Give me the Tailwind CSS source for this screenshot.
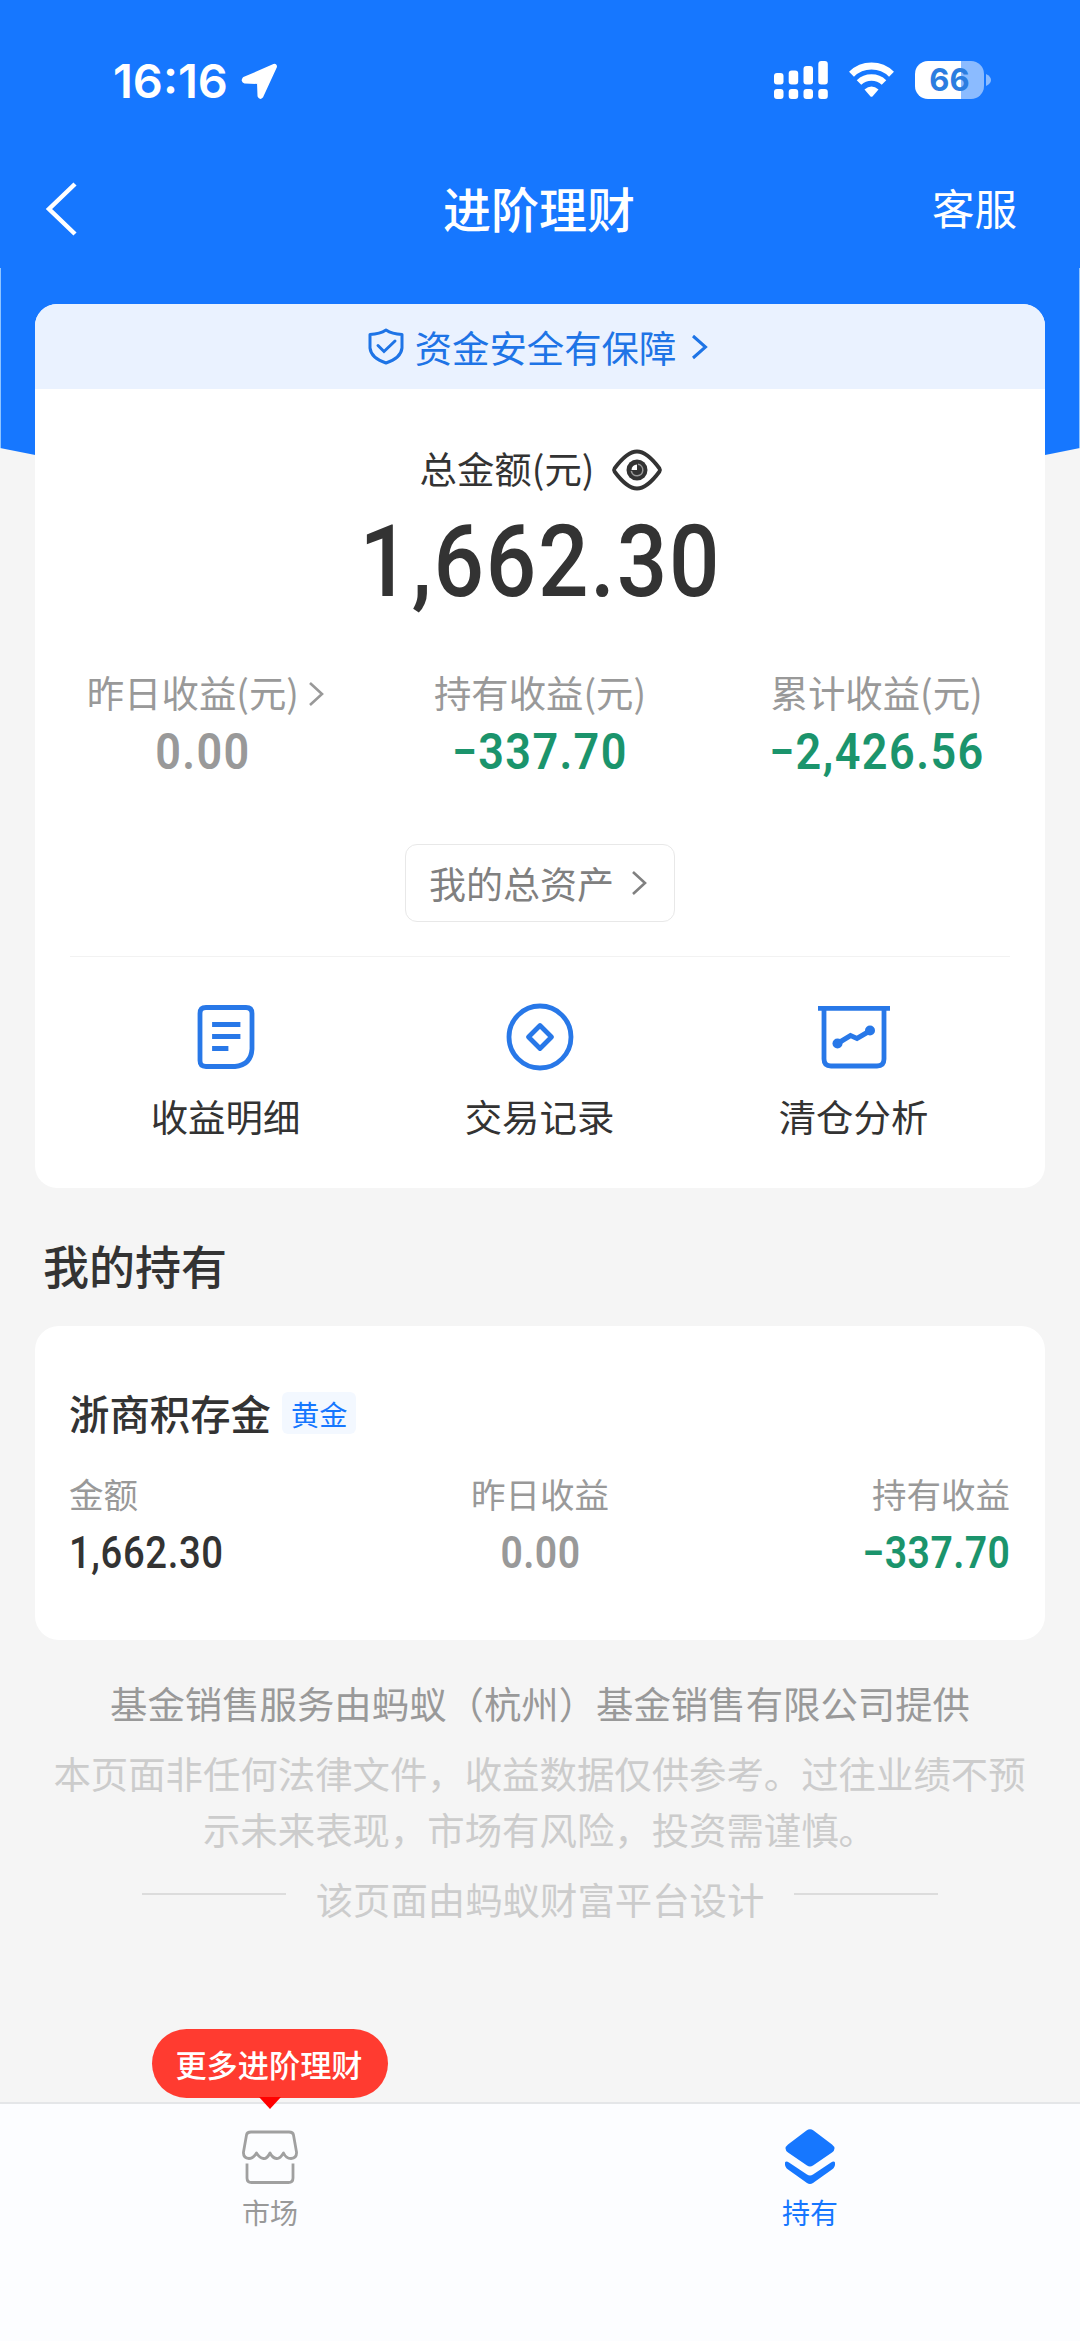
<!DOCTYPE html>
<html lang="zh-CN">
<head>
<meta charset="utf-8">
<title>进阶理财</title>
<script src="https://cdn.jsdelivr.net/npm/@tailwindcss/browser@4"></script>
</head>
<body class="bg-[#f5f5f5]">
<div class="relative isolate flex h-[2341px] w-[1080px] flex-col overflow-hidden bg-[#f5f5f5] font-['Noto_Sans_CJK_SC',sans-serif] text-[37.4px] text-[#333]">

  <!-- blue backdrop with a curved lower edge -->
  <svg class="absolute top-0 left-0 -z-10" width="1080" height="480" viewBox="0 0 1080 480"><path d="M0 0H1080V448Q540 560 0 448Z" fill="#1677ff"/><path d="M.5 268V448M1079.5 268V448" stroke="#8fc4ff"/></svg>

  <!-- status bar -->
  <div class="flex h-[160px] items-center justify-between pr-[89px] pl-[113px] text-white">
    <div class="flex items-center gap-[12px]">
      <span class="mt-[2px] font-[Inter,sans-serif] text-[47px] leading-[60px] font-semibold">16:16</span>
      <svg class="mt-[1px]" width="38" height="38" viewBox="0 0 38 38"><path d="M34 3.500 4 16.500Q2 19 5 20L18.500 20.500 19 34Q20 36.500 21.700 34.500L35.500 4.500Q35.500 3 34 3.500Z" fill="#fff" stroke="#fff" stroke-width="3" stroke-linejoin="round"/></svg>
    </div>
    <div class="flex items-center">
      <svg width="54" height="38" viewBox="0 0 54 38" fill="#fff"><rect y="12" width="9.500" height="11.500" rx="3"/><rect x="14.700" y="9.500" width="9.500" height="14" rx="3"/><rect x="29.500" y="5" width="9.500" height="18.500" rx="3"/><rect x="44.300" y="0" width="9.500" height="23.500" rx="3"/><rect y="28" width="9.500" height="10" rx="3"/><rect x="14.700" y="28" width="9.500" height="10" rx="3"/><rect x="29.500" y="28" width="9.500" height="10" rx="3"/><rect x="44.300" y="28" width="9.500" height="10" rx="3"/></svg>
      <svg class="ml-[20px]" width="47" height="36" viewBox="0 0 47 36"><path d="M3.500 12.300A28.500 28.500 0 0 1 43.500 12.300" fill="none" stroke="#fff" stroke-width="7"/><path d="M11 20.500A18 18 0 0 1 36 20.500" fill="none" stroke="#fff" stroke-width="6.500"/><path d="M16.500 27.500Q23.500 21.500 30.500 27.500L24.700 34.200Q23.500 35.300 22.300 34.200Z" fill="#fff"/></svg>
      <div class="ml-[20px] flex h-[38px] w-[69px] items-center justify-center rounded-[13px] bg-[linear-gradient(to_right,#fff_46px,#8bbbff_46px)] font-[Inter,sans-serif] text-[31px] leading-[38px] font-bold text-[#2b7de0]">66</div>
      <svg class="ml-[2px]" width="5" height="12" viewBox="0 0 5 12"><path d="M0 0Q5 2.500 5 6T0 12Z" fill="#8bbbff"/></svg>
    </div>
  </div>

  <!-- navigation -->
  <div class="grid h-[90px] grid-cols-3 items-center text-white">
    <svg class="mt-[5px] ml-[44px]" width="36" height="56" viewBox="0 0 36 56"><path d="M31 3 5 28 31 53" fill="none" stroke="#fff" stroke-width="4.500"/></svg>
    <h1 class="pt-[2px] pr-[2px] text-center text-[48px] leading-[90px] font-medium">进阶理财</h1>
    <div class="pt-[2px] pr-[63px] text-right text-[42.500px] leading-[90px]">客服</div>
  </div>

  <!-- summary card -->
  <section class="mx-[35px] mt-[54px] flex h-[884px] flex-col overflow-hidden rounded-[22px] bg-white">
    <div class="flex h-[85px] items-center justify-center bg-[#eaf2ff] pr-[3px] text-[#1e74e6]">
      <svg width="36" height="37" viewBox="0 0 36 37" fill="none" stroke="currentColor" stroke-width="3"><path d="M18 2Q24 6 34 6.500V20Q33 30 18 35Q3 30 2 20V6.500Q12 6 18 2Z" stroke-linejoin="round"/><path d="M10 17.500 16 23.500 27 13" stroke-linecap="round"/></svg>
      <span class="ml-[11px] pt-[2px] leading-[83px]">资金安全有保障</span>
      <svg class="ml-[15px]" width="18" height="26" viewBox="0 0 18 26" fill="none" stroke="currentColor" stroke-width="3"><path d="M2 2 14.500 13 2 24"/></svg>
    </div>

    <div class="mt-[49px] flex h-[60px] items-center justify-center gap-[17px]">
      <span class="pl-[3px] leading-[60px]">总金额(元)</span>
      <svg class="mt-[3px]" width="52" height="42" viewBox="0 0 52 42"><path d="M3.500 19.500Q16 2.500 26 2.500T48.500 19.500Q49.500 21 48.500 22.500Q36 39.500 26 39.500T3.500 22.500Q2.500 21 3.500 19.500Z" fill="none" stroke="#333" stroke-width="3.800"/><circle cx="26" cy="21" r="10.500" fill="#333"/><path d="M26 15.500V21H20.500A5.500 5.500 0 0 1 26 15.500Z" fill="#fff"/><path d="M27 15.300A5.800 5.800 0 1 1 20.300 22" fill="none" stroke="#999" stroke-width="1.500"/></svg>
    </div>
    <div class="mt-[14px] flex h-[100px] items-center justify-center"><span class="inline-block origin-center scale-x-[0.88] pl-[2px] font-[Roboto,sans-serif] text-[101px] leading-[100px] font-medium tracking-[2px]">1,662.30</span></div>

    <div class="mt-[55px] grid grid-cols-3 text-center">
      <div>
        <div class="flex h-[50px] items-center justify-center gap-[9px] pl-[5px] leading-[50px] text-[#999]">昨日收益(元)<svg class="mt-[3px]" width="17" height="26" viewBox="0 0 17 26" fill="none" stroke="currentColor" stroke-width="2.600"><path d="M2 2 14 13 2 24"/></svg></div>
        <div class="mt-[5px] font-[Roboto,sans-serif] text-[50px] leading-[60px] font-semibold text-[#999]"><span class="inline-block scale-x-[0.9] tracking-[1.500px]">0.00</span></div>
      </div>
      <div>
        <div class="h-[50px] leading-[50px] text-[#999]">持有收益(元)</div>
        <div class="mt-[5px] font-[Roboto,sans-serif] text-[50px] leading-[60px] font-semibold text-[#1b946c]"><span class="inline-block scale-x-[0.9] tracking-[1.500px]">−337.70</span></div>
      </div>
      <div>
        <div class="h-[50px] leading-[50px] text-[#999]">累计收益(元)</div>
        <div class="mt-[5px] font-[Roboto,sans-serif] text-[50px] leading-[60px] font-semibold text-[#1b946c]"><span class="inline-block scale-x-[0.9] tracking-[1.600px]">−2,426.56</span></div>
      </div>
    </div>

    <div class="mt-[62px] flex h-[78px] w-[270px] items-center self-center rounded-[12px] border-[1.500px] border-[#e8e8e8] pl-[23px] text-[37px] text-[#808080]">
      <span class="leading-[75px]">我的总资产</span>
      <svg class="ml-[17px]" width="17" height="26" viewBox="0 0 17 26" fill="none" stroke="currentColor" stroke-width="2.600"><path d="M2 2 14 13 2 24"/></svg>
    </div>

    <div class="mx-[35px] mt-[34px] h-px shrink-0 bg-[#f2f2f2]"></div>

    <div class="mx-[34px] mt-[46px] grid grid-cols-3 text-center leading-[50px]">
      <div class="flex flex-col items-center gap-[20px]">
        <svg width="60" height="68" viewBox="0 0 60 68" fill="none" stroke="#2878e8" stroke-width="4.800"><path d="M10 4.500H50Q56 4.500 56 10.500V46Q55 62 39 63.500H10Q4 63.500 4 57.500V10.500Q4 4.500 10 4.500Z"/><path d="M18.500 21.500H42M18.500 33.500H42M18.500 45.500H30" stroke-linecap="square"/></svg>
        <span class="pr-px">收益明细</span>
      </div>
      <div class="flex flex-col items-center gap-[20px]">
        <svg width="68" height="68" viewBox="0 0 68 68" fill="none" stroke="#2878e8" stroke-width="4.800"><circle cx="34" cy="34" r="31"/><path d="M34 22.500 45.500 34 34 45.500 22.500 34Z" stroke-linejoin="round"/></svg>
        <span class="pr-px">交易记录</span>
      </div>
      <div class="flex flex-col items-center gap-[20px]">
        <svg width="72" height="68" viewBox="0 0 72 68" fill="none" stroke="#2878e8" stroke-width="4.800"><path d="M0 5.300H72M6 5V56Q6 63 13 63H59Q66 63 66 56V5"/><path d="M19.500 40.500 32.500 32.500 39 35.500 52.500 27.500" stroke-width="5"/><circle cx="19.500" cy="40.500" r="5" fill="#2878e8" stroke="none"/><circle cx="52" cy="27.500" r="5" fill="#2878e8" stroke="none"/></svg>
        <span class="pr-px">清仓分析</span>
      </div>
    </div>
  </section>

  <h2 class="mt-[46px] ml-[43px] h-[61px] text-[46px] leading-[60px] font-medium">我的持有</h2>

  <!-- holding card -->
  <section class="mx-[35px] mt-[31px] h-[314px] rounded-[24px] bg-white px-[35px] pt-[57px]">
    <div class="-ml-px flex h-[60px] items-center">
      <span class="text-[40.4px] leading-[60px] font-medium">浙商积存金</span>
      <span class="ml-[11px] flex h-[42px] items-center rounded-[6px] bg-[#f3f8ff] px-[9px] pt-[2px] text-[28.200px] text-[#1677ff]">黄金</span>
    </div>
    <div class="mt-[25px] grid grid-cols-3">
      <div class="-ml-px">
        <div class="text-[34.500px] leading-[50px] text-[#999]">金额</div>
        <div class="mt-[11px] font-[Roboto,sans-serif] text-[43.500px] leading-[50px] font-medium"><span class="inline-block origin-left scale-x-[0.88] tracking-[0.700px]">1,662.30</span></div>
      </div>
      <div class="text-center">
        <div class="text-[34.500px] leading-[50px] text-[#999]">昨日收益</div>
        <div class="mt-[11px] font-[Roboto,sans-serif] text-[43.500px] leading-[50px] font-semibold text-[#999]"><span class="inline-block scale-x-[0.9] tracking-[0.500px]">0.00</span></div>
      </div>
      <div class="text-right">
        <div class="text-[34.500px] leading-[50px] text-[#999]">持有收益</div>
        <div class="mt-[11px] font-[Roboto,sans-serif] text-[43.500px] leading-[50px] font-semibold text-[#1b946c]"><span class="inline-block origin-right scale-x-[0.9] tracking-[0.500px]">−337.70</span></div>
      </div>
    </div>
  </section>

  <!-- disclaimers -->
  <p class="mt-[35px] text-center leading-[56px] text-[#999]">基金销售服务由蚂蚁（杭州）基金销售有限公司提供</p>
  <p class="mt-[14px] pr-[1px] text-center leading-[56px] text-[#ccc]">本页面非任何法律文件，收益数据仅供参考。过往业绩不预<br>示未来表现，市场有风险，投资需谨慎。</p>
  <div class="mt-[14px] flex items-center justify-center gap-[30px] leading-[56px] text-[#ccc]">
    <span class="mb-[10px] h-[2px] w-[144px] bg-[#dcdcdc]"></span>
    <span>该页面由蚂蚁财富平台设计</span>
    <span class="mb-[10px] h-[2px] w-[144px] bg-[#dcdcdc]"></span>
  </div>

  <!-- tab bar -->
  <nav class="relative mt-auto grid h-[239px] grid-cols-2 border-t-2 border-[#e4e6e8] bg-[#fcfdff] text-[28px] leading-[40px]">
    <div class="flex flex-col items-center pt-[22px] text-[#999]">
      <svg width="58" height="62" viewBox="0 0 58 62" fill="none" stroke="#a0a0a0" stroke-width="2.800" stroke-linejoin="round"><path d="M10 6H48Q52 6 52.500 9L55.500 26Q56 32 50 32.500Q45 32.500 42.500 27Q39 33 35.500 32.500Q31.500 32 29 27Q26 33 22.500 32.500Q18.500 32 15.500 27Q12.500 32.500 8 32.500Q2 32 2.500 26L5.500 9Q6 6 10 6Z"/><path d="M6 37.500V52Q6 56.500 10.500 56.500H47.500Q52 56.500 52 52V37.500"/></svg>
      <span class="mt-[4px]">市场</span>
    </div>
    <div class="flex flex-col items-center pt-[22px] text-[#1677ff]">
      <svg width="52" height="62" viewBox="0 0 52 62" fill="#1677ff"><path d="M22.500 4.500Q26 1.800 29.500 4.500L48 18.500Q53 22.500 48 26.500L29 39.500Q26 41.500 23 39.500L4 26.500Q-1 22.500 4 18.500Z"/><path d="M1 36.500Q2 34.500 5 36.500L23 48.500Q26 50.500 29 48.500L47 36.500Q50 34.500 51 36.500Q51.500 41 48 43.500L29 57Q26 59 23 57L4 43.500Q.5 41 1 36.500Z"/></svg>
      <span class="mt-[4px]">持有</span>
    </div>
    <!-- promo bubble over the market tab -->
    <div class="absolute top-[-75px] left-[152px] flex flex-col items-center">
      <div class="h-[69px] w-[236px] rounded-full bg-[#ff3b30] pr-[2px] text-center text-[31.200px] leading-[69px] font-medium text-white">更多进阶理财</div>
      <svg class="-mt-px" width="22" height="12" viewBox="0 0 22 12"><path d="M0 0H22L11 12Z" fill="#f00"/></svg>
    </div>
  </nav>
</div>
</body>
</html>
